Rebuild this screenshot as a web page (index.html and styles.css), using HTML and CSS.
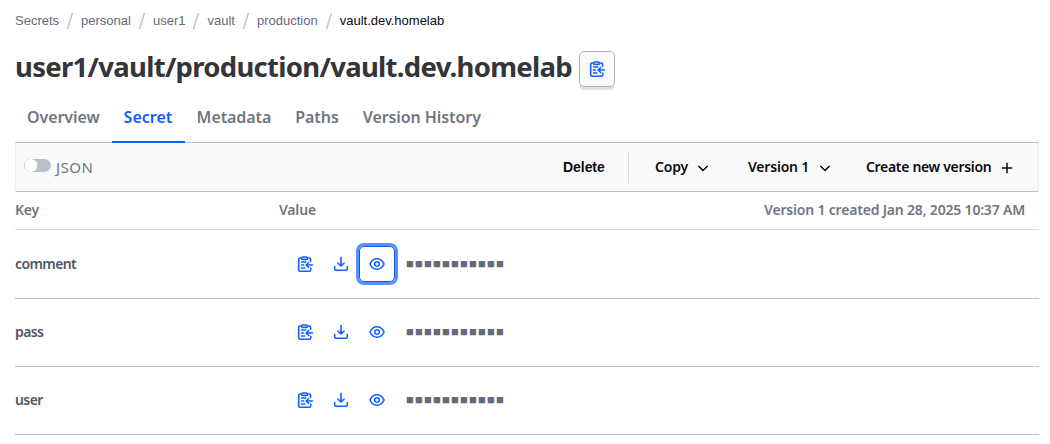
FILE: index.html
```html
<!DOCTYPE html>
<html lang="en">
<head>
<meta charset="utf-8">
<title>vault.dev.homelab</title>
<link rel="stylesheet" href="styles.css">
</head>
<body>
<svg class="sprite" aria-hidden="true">
  <symbol id="clip" viewBox="0 0 16 16">
    <rect x="4.600" y=".8" width="5.800" height="2.800" rx=".9" fill="#8db2ff" stroke="currentColor" stroke-width="1.300"/>
    <path d="M4.200 2H3.200C2.200 2 1.700 2.600 1.700 3.500v10.200c0 .9.5 1.500 1.500 1.500h9.100c1 0 1.500-.6 1.500-1.500v-1.500M10.800 2h1.200c1 0 1.600.6 1.600 1.500v1.800M4.500 6h4.200M4.500 9h2M4.500 12h3.300M15.300 9H9.400M11.700 6.500 9.200 9l2.500 2.500" fill="none" stroke="currentColor" stroke-width="1.600" stroke-linecap="round"/>
  </symbol>
  <symbol id="down" viewBox="0 0 16 16">
    <path d="M8 1.500v8.300M4.900 7 8 10l3.100-3M1.700 10.600v2.200c0 1 .6 1.500 1.500 1.500h9.600c.9 0 1.500-.5 1.500-1.500v-2.200" fill="none" stroke="currentColor" stroke-width="1.600" stroke-linecap="round" stroke-linejoin="round"/>
  </symbol>
  <symbol id="eye" viewBox="0 0 16 16">
    <path d="M.9 8C2.500 4.700 5 2.800 8 2.800s5.500 1.900 7.100 5.200C13.500 11.300 11 13.200 8 13.200S2.500 11.300.9 8Z" fill="none" stroke="currentColor" stroke-width="1.600" stroke-linejoin="round"/>
    <circle cx="8" cy="8" r="2.300" fill="none" stroke="currentColor" stroke-width="1.500"/>
  </symbol>
  <symbol id="chev" viewBox="0 0 16 16">
    <path d="m3.700 6.200 4.300 4.300 4.300-4.300" fill="none" stroke="currentColor" stroke-width="1.500" stroke-linecap="round" stroke-linejoin="round"/>
  </symbol>
  <symbol id="plus" viewBox="0 0 16 16">
    <path d="M8 3.200v9.600M3.200 8h9.600" fill="none" stroke="currentColor" stroke-width="1.500" stroke-linecap="round"/>
  </symbol>
</svg>
<main class="page">
  <nav class="crumbs">
    <a>Secrets</a><svg class="slash" viewBox="0 0 8 18"><path d="M1.500 17 6.500 1"/></svg>
    <a>personal</a><svg class="slash" viewBox="0 0 8 18"><path d="M1.500 17 6.500 1"/></svg>
    <a>user1</a><svg class="slash" viewBox="0 0 8 18"><path d="M1.500 17 6.500 1"/></svg>
    <a>vault</a><svg class="slash" viewBox="0 0 8 18"><path d="M1.500 17 6.500 1"/></svg>
    <a>production</a><svg class="slash" viewBox="0 0 8 18"><path d="M1.500 17 6.500 1"/></svg>
    <a class="current">vault.dev.homelab</a>
  </nav>
  <header class="head">
    <h1>user1/vault/production/vault.dev.homelab</h1>
    <button class="copy-path"><svg class="icon"><use href="#clip"/></svg></button>
  </header>
  <nav class="tabs">
    <a>Overview</a><a class="active">Secret</a><a>Metadata</a><a>Paths</a><a>Version History</a>
  </nav>
  <div class="toolbar">
    <label class="toggle"><span class="switch"></span><span class="json">JSON</span></label>
    <div class="actions">
      <span class="delete">Delete</span>
      <span class="divider"></span>
      <span class="action copy"><span>Copy</span><svg class="icon"><use href="#chev"/></svg></span>
      <span class="action version"><span>Version 1</span><svg class="icon"><use href="#chev"/></svg></span>
      <span class="action create"><span>Create new version</span><svg class="icon"><use href="#plus"/></svg></span>
    </div>
  </div>
  <div class="row labels"><span>Key</span><span>Value</span><span class="created">Version 1 created Jan 28, 2025 10:37 AM</span></div>
  <div class="row item"><span class="key">comment</span><div class="value"><button><svg class="icon"><use href="#clip"/></svg></button><button><svg class="icon"><use href="#down"/></svg></button><button class="focused"><svg class="icon"><use href="#eye"/></svg></button><span class="mask">■■■■■■■■■■■</span></div></div>
  <div class="row item"><span class="key">pass</span><div class="value"><button><svg class="icon"><use href="#clip"/></svg></button><button><svg class="icon"><use href="#down"/></svg></button><button><svg class="icon"><use href="#eye"/></svg></button><span class="mask">■■■■■■■■■■■</span></div></div>
  <div class="row item"><span class="key">user</span><div class="value"><button><svg class="icon"><use href="#clip"/></svg></button><button><svg class="icon"><use href="#down"/></svg></button><button><svg class="icon"><use href="#eye"/></svg></button><span class="mask">■■■■■■■■■■■</span></div></div>
</main>
</body>
</html>
```
FILE: styles.css
```css
* { box-sizing: border-box; }
body { margin: 0; background: #fff; font-family: "Noto Sans", sans-serif; color: #6f7682; overflow: hidden; }
.sprite { display: none; }
.icon { width: 16px; height: 16px; display: block; flex: none; }
.page { width: 1024px; margin-left: 15px; }
.crumbs { display: flex; align-items: center; height: 42px; font: 13px/18px "Liberation Sans", sans-serif; color: #656a76; }
.slash { width: 8px; height: 18px; margin: 0 7px; fill: none; stroke: #c2c5cb; stroke-width: 1.5; }
.current { color: #0c0c0e; }
.head { display: flex; align-items: center; height: 54px; gap: 8px; }
h1 { margin: 0; padding-bottom: 4px; width: 556px; font-size: 27.5px; line-height: 36px; font-weight: 700; letter-spacing: -.71px; color: #333539; white-space: nowrap; }
button { display: flex; align-items: center; justify-content: center; width: 36px; height: 36px; padding: 0; border: 0; border-radius: 5px; background: none; color: #1060ff; }
.copy-path { border: 1px solid #b2b4b9; background: #fafafa; box-shadow: 0 4px 1px -1px #dedfe1; }
.tabs { display: flex; height: 46px; font-size: 16px; line-height: 42px; font-weight: 600; }
.tabs a { padding: 0 12px; height: 47px; white-space: nowrap; letter-spacing: -.08px; }
.tabs .active { color: #1060ff; border-bottom: 2px solid #1060ff; z-index: 1; width: 73px; letter-spacing: 0; }
.toolbar { display: flex; justify-content: space-between; height: 50px; border: 1px solid #bac1cc; border-left-color: #ebeef2; border-right-color: #ebeef2; background: #fafafa; }
.toggle { display: flex; align-items: center; padding-left: 8px; gap: 5px; }
.switch { width: 27px; height: 13px; border-radius: 7px; background: radial-gradient(circle at 7px 50%, #fff 6px, #bac1cc 6.6px); margin-top: -3px; }
.json { font-size: 15px; letter-spacing: .5px; padding-bottom: 1px; }
.actions { display: flex; align-items: center; font-size: 14px; font-weight: 600; color: #0c0c0e; white-space: nowrap; }
.delete { width: 65px; font-family: "Liberation Sans", sans-serif; letter-spacing: -.05px; }
.divider { width: 1px; height: 32px; background: #dcdee2; }
.action { display: flex; align-items: center; gap: 7px; padding-bottom: 1px; }
.action .icon { margin-top: 2px; }
.copy { padding-left: 26px; width: 119px; letter-spacing: -.2px; }
.version { width: 118px; letter-spacing: -.2px; gap: 8px; }
.create { width: 172px; letter-spacing: -.32px; gap: 8px; }
.row { display: grid; grid-template-columns: 264px 1fr auto; align-items: center; font-size: 14px; font-weight: 600; }
.labels { height: 38px; padding-bottom: 2px; border-bottom: 1px solid #dcdee5; letter-spacing: -.19px; }
.created { padding-right: 14px; }
.item { border-bottom: 1px solid #bac1cc; height: 68px; padding-bottom: 1px; }
.labels + .item { height: 69px; padding-bottom: 0; }
.key { color: #525761; letter-spacing: -.6px; padding-bottom: 2px; }
.value { display: flex; align-items: center; padding-left: 8px; }
.focused { border: 1px solid #0c56e9; box-shadow: 0 0 0 3px #5990ff; }
.mask { margin-left: 11px; padding-top: 1px; font: 13px/16px "Liberation Mono", monospace; letter-spacing: 1.2px; color: #656a76; }
```
